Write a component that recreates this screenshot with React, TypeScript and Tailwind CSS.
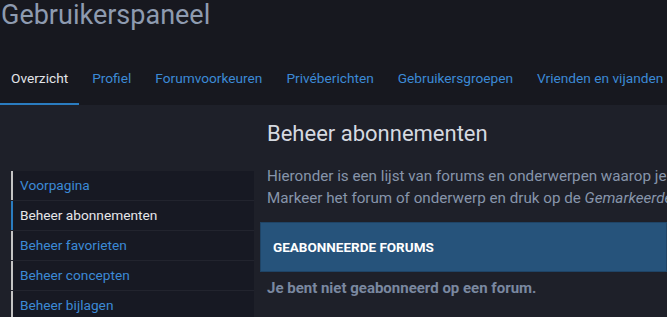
import React from "react";

const tabs = ["Overzicht", "Profiel", "Forumvoorkeuren", "Privéberichten", "Gebruikersgroepen", "Vrienden en vijanden"];
const side = ["Voorpagina", "Beheer abonnementen", "Beheer favorieten", "Beheer concepten", "Beheer bijlagen"];

export default function App() {
  return (
    <div className="w-[667px] h-[317px] overflow-hidden bg-[#1e2029] font-['Roboto',sans-serif]">
      <div className="bg-[#17181f] h-[105px] flex flex-col">
        <h1 className="text-[27px] leading-[28px] text-[#8e9bb0] pl-[1px] pt-[1px] whitespace-nowrap">Gebruikerspaneel</h1>
        <nav className="flex gap-[2px] mt-auto whitespace-nowrap">
          {tabs.map((t, i) => (
            <div
              key={t}
              className={
                i === 0
                  ? "px-[11px] h-[52px] flex items-center text-[13.7px] text-[#e2e4e8] border-b-2 border-[#2a7cc0]"
                  : "px-[11px] h-[52px] flex items-center text-[13.7px] text-[#3c8ad6] pb-[2px]"
              }
            >
              {t}
            </div>
          ))}
        </nav>
      </div>
      <div className="flex">
        <aside className="w-[243px] ml-[11px] mt-[66px] flex flex-col gap-[1px] bg-[#22242e] shrink-0">
          {side.map((s, i) => (
            <div
              key={s}
              className={
                "h-[29px] flex items-center pl-[7px] text-[13.7px] bg-[#171923] border-l-2 " +
                (i === 1 ? "border-[#2a7cc0] text-[#e6e7ea]" : "border-[#c4c4c4] text-[#3c8ad6]")
              }
            >
              {s}
            </div>
          ))}
        </aside>
        <main className="flex-1 ml-[6px] min-w-0">
          <h2 className="text-[22px] leading-[26px] text-[#d5d9e0] ml-[7px] mt-[16px] whitespace-nowrap">Beheer abonnementen</h2>
          <p className="text-[15.2px] leading-[22px] text-[#8795ab] ml-[7px] mt-[18px] whitespace-nowrap">
            Hieronder is een lijst van forums en onderwerpen waarop je bent geabonneerd.
            <br />
            Markeer het forum of onderwerp en druk op de <em>Gemarkeerde</em> verwijderen.
          </p>
          <div className="mt-[13px] h-[50px] bg-[#26537b] border border-[#1f4466] flex items-center pl-[12px] text-[13.5px] font-bold text-white whitespace-nowrap">
            GEABONNEERDE FORUMS
          </div>
          <p className="text-[15px] leading-[22px] font-bold text-[#7a88a0] ml-[7px] mt-[5px] whitespace-nowrap">Je bent niet geabonneerd op een forum.</p>
        </main>
      </div>
    </div>
  );
}
